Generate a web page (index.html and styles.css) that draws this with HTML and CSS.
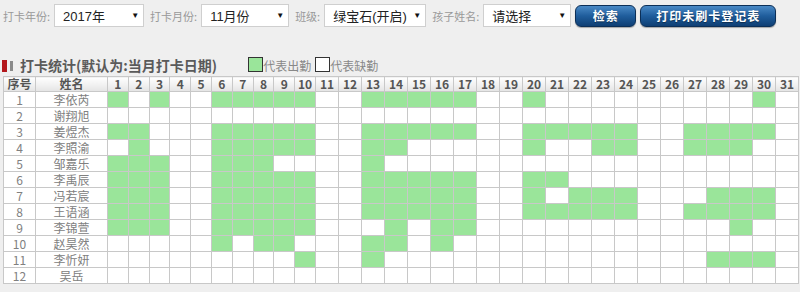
FILE: index.html
```html
<!DOCTYPE html>
<html lang="zh-CN">
<head>
  <meta charset="UTF-8" />
  <title>打卡统计</title>
  <link rel="stylesheet" href="styles.css">
</head>
<body>
  <div class="toolbar">
    <span class="label">打卡年份:</span>
    <div class="select year"><span>2017年</span><i>▼</i></div>
    <span class="label">打卡月份:</span>
    <div class="select month"><span>11月份</span><i>▼</i></div>
    <span class="label">班级:</span>
    <div class="select klass"><span>绿宝石(开启)</span><i>▼</i></div>
    <span class="label">孩子姓名:</span>
    <div class="select child"><span>请选择</span><i>▼</i></div>
    <button class="btn search">检索</button>
    <button class="btn print">打印未刷卡登记表</button>
  </div>

  <div class="title-row">
    <span class="mark"></span>
    <h3>打卡统计(默认为:当月打卡日期)</h3>
    <div class="legend">
      <span class="box on"></span><span class="legend-text">代表出勤</span>
      <span class="box"></span><span class="legend-text">代表缺勤</span>
    </div>
  </div>

  <table class="stats" id="stats">
    <colgroup id="cols"></colgroup>
    <thead><tr id="head"></tr></thead>
    <tbody id="rows"></tbody>
  </table>

  <script>
    // 每个孩子当月出勤的日期
    var data = [
      ['李依芮', [1,3,6,7,8,9,10,13,14,15,16,17,20,30]],
      ['谢翔旭', []],
      ['姜煜杰', [1,2,6,7,8,9,10,13,14,15,16,17,20,21,22,23,24,27,28,29,30]],
      ['李照渝', [2,6,7,8,9,10,13,14,20,23,24,27,28,29]],
      ['邹嘉乐', [1,2,3,6,7,8,13]],
      ['李禹辰', [1,2,3,6,7,8,9,10,13,14,15,16,17,20,21]],
      ['冯若宸', [1,2,3,6,7,8,9,10,13,14,15,16,17,20,22,23,24,28,29,30]],
      ['王语涵', [1,2,3,6,7,8,9,10,13,14,15,16,17,20,21,22,23,24,27,28,29,30]],
      ['李锦萱', [1,2,3,6,7,8,9,10,14,16,17,29]],
      ['赵昊然', [6,8,9,13,14,16]],
      ['李忻妍', [10,13,28,29,30]],
      ['吴岳', []]
    ];

    var cols = '<col class="c-no"><col class="c-name">';
    var head = '<th>序号</th><th>姓名</th>';
    for (var d = 1; d <= 31; d++) {
      cols += '<col class="' + (d < 11 ? 'c-day' : 'c-day2') + '">';
      head += '<th>' + d + '</th>';
    }
    document.getElementById('cols').innerHTML = cols;
    document.getElementById('head').innerHTML = head;

    var html = '';
    data.forEach(function (row, i) {
      html += '<tr><td>' + (i + 1) + '</td><td>' + row[0] + '</td>';
      for (var d = 1; d <= 31; d++) {
        html += row[1].indexOf(d) > -1 ? '<td class="on"></td>' : '<td></td>';
      }
      html += '</tr>';
    });
    document.getElementById('rows').innerHTML = html;
  </script>
</body>
</html>
```

FILE: styles.css
```css
* {
  box-sizing: border-box;
  margin: 0;
  padding: 0;
}

body {
  background: #efefef;
  font-family: "Noto Sans CJK SC", sans-serif;
  color: #555;
}

/* 顶部筛选栏 */
.toolbar {
  display: flex;
  align-items: center;
  height: 31px;
  padding: 0 0 0 3px;
}

.label {
  font-size: 11px;
  color: #999;
  margin-right: 4px;
  margin-left: 6px;
}

.label:first-child {
  margin-left: 0;
}

.select {
  display: flex;
  align-items: center;
  justify-content: space-between;
  height: 23px;
  padding: 0 4px 0 8px;
  background: #fff;
  border: 1px solid #cfcfcf;
  font-family: "Liberation Sans", "Noto Sans CJK SC", sans-serif;
  font-size: 13px;
  color: #222;
}

.select i {
  font-style: normal;
  font-size: 8px;
  color: #111;
}

.year { width: 90px; }
.month { width: 88px; }
.klass { width: 102px; }
.child { width: 88px; }

.btn {
  height: 22px;
  margin-left: 4px;
  border: 1px solid #0c2f57;
  border-radius: 6px;
  background: linear-gradient(#4a8ac6, #1f5d9c 50%, #0f3f74);
  color: #fff;
  font-family: "Noto Sans CJK SC", sans-serif;
  font-size: 12px;
  font-weight: bold;
  letter-spacing: 1px;
  text-shadow: 0 1px 1px rgba(0, 0, 0, 0.4);
  box-shadow: 0 1px 1px rgba(0, 0, 0, 0.3);
}

.search { width: 61px; margin-left: 4px; }
.print { width: 136px; }

/* 标题 */
.title-row {
  display: flex;
  align-items: flex-end;
  height: 45px;
  padding: 0 0 1px 2px;
}

.mark {
  width: 5px;
  height: 12px;
  margin-bottom: 3px;
  background: #b3171c;
  box-shadow: 7px 0 0 -1px #8a8a8a;
}

h3 {
  margin-left: 13px;
  font-size: 14px;
  line-height: 19px;
  font-weight: bold;
  color: #5a5a5a;
}

.legend {
  display: flex;
  align-items: flex-end;
  margin-left: 31px;
  margin-bottom: 3px;
}

.box {
  width: 15px;
  height: 15px;
  border: 1px solid #333;
  background: #fff;
}

.box.on {
  background: #9ae59a;
}

.legend-text {
  font-size: 12px;
  line-height: 12px;
  color: #888;
  margin-right: 4px;
}

/* 统计表 */
.stats {
  table-layout: fixed;
  border-collapse: collapse;
  width: 795px;
  margin-left: 3px;
  background: #fff;
}

.c-no { width: 32px; }
.c-name { width: 72px; }
.c-day { width: 20.8px; }
.c-day2 { width: 23px; }

.stats th,
.stats td {
  border: 1px solid #c8c8c8;
  text-align: center;
  font-size: 12px;
  padding: 0;
}

.stats th {
  height: 15px;
  line-height: 14px;
  font-weight: bold;
  color: #555;
  background: linear-gradient(#fff, #e4e4e4);
}

.stats td {
  height: 16px;
  line-height: 15px;
  color: #808080;
}

.stats td.on {
  background: #9ae59a;
}
```
